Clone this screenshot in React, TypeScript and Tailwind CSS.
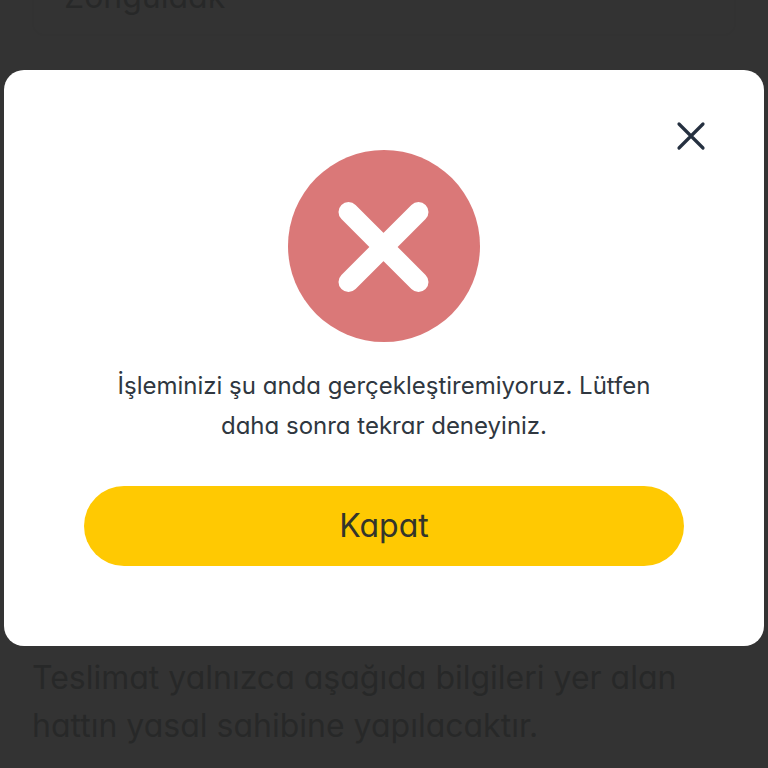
import { useState } from 'react';

interface ErrorModalProps {
  message: string;
  onClose: () => void;
}

function ErrorModal({ message, onClose }: ErrorModalProps) {
  return (
    <div className="fixed inset-0 overflow-y-auto bg-black/80 px-1 pt-[70px]">
      <div
        role="alertdialog"
        aria-modal="true"
        aria-describedby="modal-message"
        className="relative flex flex-col items-center rounded-[20px] bg-white p-20 text-[#2f3740]"
      >
        <button
          type="button"
          aria-label="Kapat"
          onClick={onClose}
          className="absolute top-[46px] right-[53px] cursor-pointer"
        >
          <svg
            viewBox="0 0 40 40"
            className="size-10"
            fill="none"
            stroke="#253040"
            strokeWidth="3.2"
            strokeLinecap="round"
          >
            <path d="M8 8 32 32M32 8 8 32" />
          </svg>
        </button>

        <svg viewBox="0 0 192 192" className="size-48" fill="none" aria-hidden="true">
          <circle cx="96" cy="96" r="96" fill="#da7878" />
          <path
            d="M60.5 62 130.5 132M130.5 62 60.5 132"
            stroke="white"
            strokeWidth="20"
            strokeLinecap="round"
          />
        </svg>

        <p id="modal-message" className="mt-6 px-6 text-center text-[24px] leading-10">
          {message}
        </p>

        <button
          type="button"
          onClick={onClose}
          className="mt-10 h-20 w-full cursor-pointer rounded-full bg-[#ffc902] text-[32px] text-[#33352b]"
        >
          Kapat
        </button>
      </div>
    </div>
  );
}

function App() {
  const [open, setOpen] = useState(true);

  return (
    <div
      lang="tr"
      className="min-h-screen overflow-hidden font-['Inter','Liberation_Sans',sans-serif] [font-feature-settings:'cv11']"
    >
      <main className="flex min-h-screen flex-col justify-between bg-white px-8 pb-[18px] text-[32px] text-[#c4c8c8]">
        <input
          aria-label="Şehir"
          defaultValue="Zonguldak"
          className="-mt-11 h-20 w-full rounded-xl border-2 border-[#f8f8f8] px-[30px]"
        />
        <p className="pr-8 leading-[48px]">
          Teslimat yalnızca aşağıda bilgileri yer alan hattın yasal sahibine yapılacaktır.
        </p>
      </main>

      {open && (
        <ErrorModal
          message="İşleminizi şu anda gerçekleştiremiyoruz. Lütfen daha sonra tekrar deneyiniz."
          onClose={() => setOpen(false)}
        />
      )}
    </div>
  );
}

export default App;
